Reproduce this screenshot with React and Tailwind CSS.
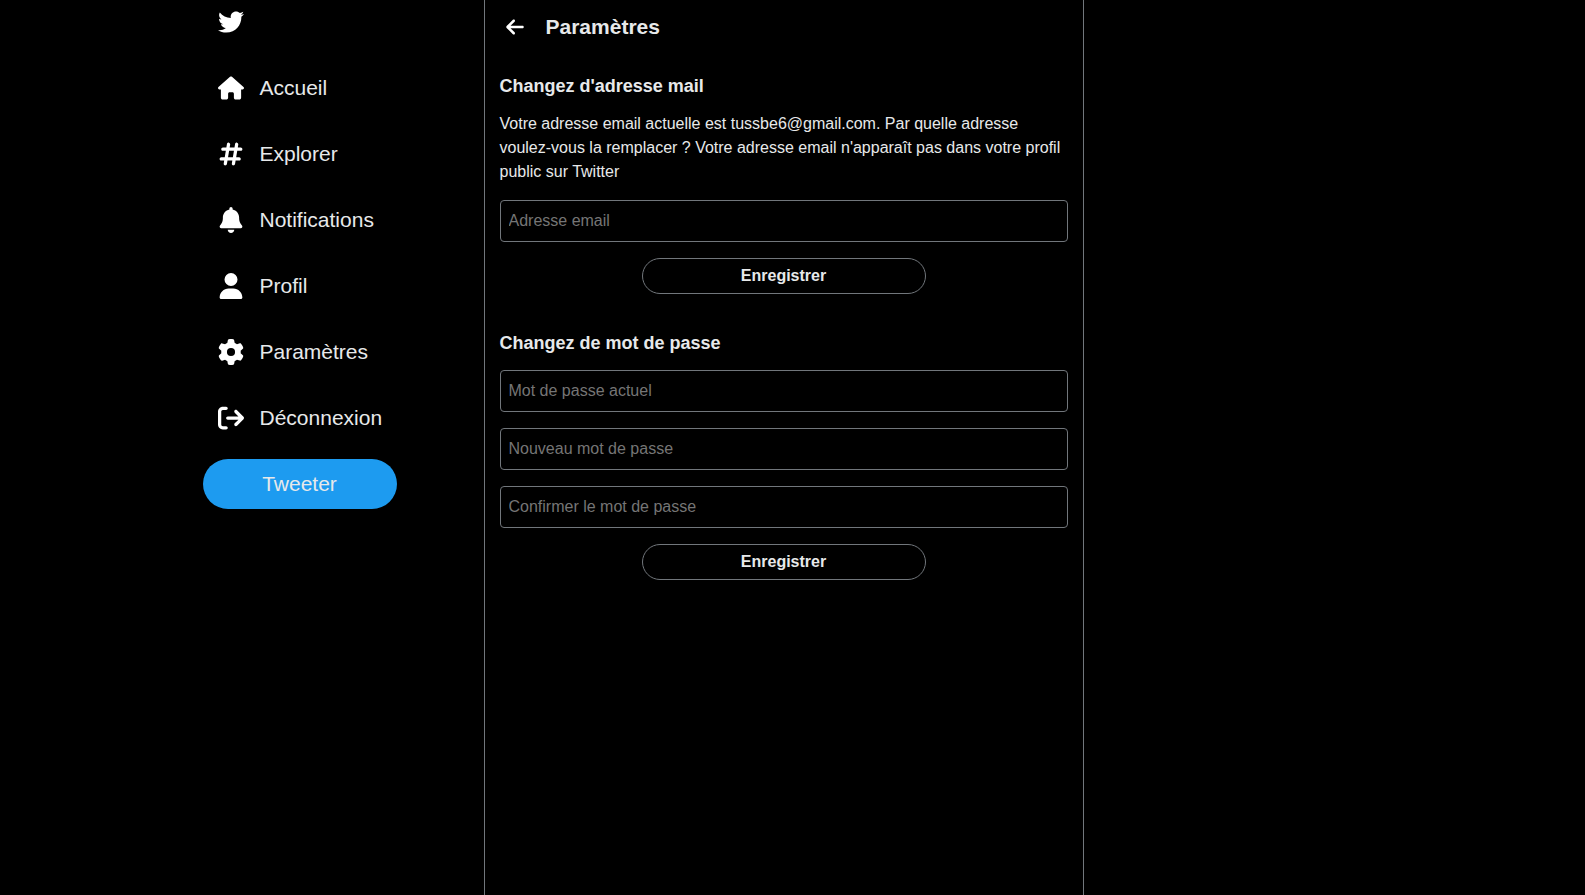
import {
  FaArrowLeft,
  FaArrowRightFromBracket,
  FaBell,
  FaGear,
  FaHashtag,
  FaHouse,
  FaTwitter,
  FaUser,
} from "react-icons/fa6";

const links = [
  { label: "Accueil", href: "#accueil", Icon: FaHouse },
  { label: "Explorer", href: "#explorer", Icon: FaHashtag },
  { label: "Notifications", href: "#notifications", Icon: FaBell },
  { label: "Profil", href: "#profil", Icon: FaUser },
  { label: "Paramètres", href: "#parametres", Icon: FaGear },
  { label: "Déconnexion", href: "#deconnexion", Icon: FaArrowRightFromBracket },
];

function Sidebar() {
  return (
    <nav className="flex w-[281px] shrink-0 flex-col items-start gap-4">
      <a href="#accueil" aria-label="Twitter" className="px-[15px] pt-[9px] pb-3 text-white">
        <FaTwitter className="size-[26px]" />
      </a>
      {links.map(({ label, href, Icon }) => (
        <a key={label} href={href} className="flex items-center gap-4 px-[15px] py-3 text-[21px] leading-[26px]">
          <Icon className="size-[26px] text-white" />
          {label}
        </a>
      ))}
      <button type="button" className="h-[50px] w-[194px] rounded-full bg-[#1d9bf0] text-[21px] leading-[26px]">
        Tweeter
      </button>
    </nav>
  );
}

function Field({ id, type, label }) {
  return (
    <input
      id={id}
      type={type}
      aria-label={label}
      placeholder={label}
      className="h-[42px] w-full rounded border border-[#71767b] bg-black px-2 text-base outline-none placeholder:text-[#757575]"
    />
  );
}

function SaveButton() {
  return (
    <button type="submit" className="h-9 w-1/2 self-center rounded-full border border-[#71767b] text-base leading-6 font-bold">
      Enregistrer
    </button>
  );
}

export default function App() {
  return (
    <div className="min-h-screen bg-black font-['Liberation_Sans',Arial,sans-serif] text-[#e7e9ea]">
      <div className="mx-auto flex min-h-screen max-w-[1180px]">
        <Sidebar />
        <main className="w-full max-w-[600px] border-x border-[#71767b]">
          <header className="flex items-center gap-[21px] px-5 py-3">
            <a href="#accueil" aria-label="Retour" className="text-white">
              <FaArrowLeft className="size-5" />
            </a>
            <h1 className="text-[21px] leading-[30px] font-bold">Paramètres</h1>
          </header>
          <div className="flex flex-col gap-9 px-[15px] pt-5">
            <form className="flex flex-col gap-4" onSubmit={(e) => e.preventDefault()}>
              <div className="flex flex-col gap-[14px]">
                <h2 className="text-[18px] leading-6 font-bold">Changez d'adresse mail</h2>
                <p className="text-base leading-6">
                  Votre adresse email actuelle est tussbe6@gmail.com. Par quelle adresse voulez-vous la remplacer ?
                  Votre adresse email n'apparaît pas dans votre profil public sur Twitter
                </p>
              </div>
              <Field id="email" type="email" label="Adresse email" />
              <SaveButton />
            </form>
            <form className="flex flex-col gap-[14px]" onSubmit={(e) => e.preventDefault()}>
              <h2 className="text-[18px] leading-[26px] font-bold">Changez de mot de passe</h2>
              <div className="flex flex-col gap-4">
                <Field id="current-password" type="password" label="Mot de passe actuel" />
                <Field id="new-password" type="password" label="Nouveau mot de passe" />
                <Field id="confirm-password" type="password" label="Confirmer le mot de passe" />
                <SaveButton />
              </div>
            </form>
          </div>
        </main>
      </div>
    </div>
  );
}
